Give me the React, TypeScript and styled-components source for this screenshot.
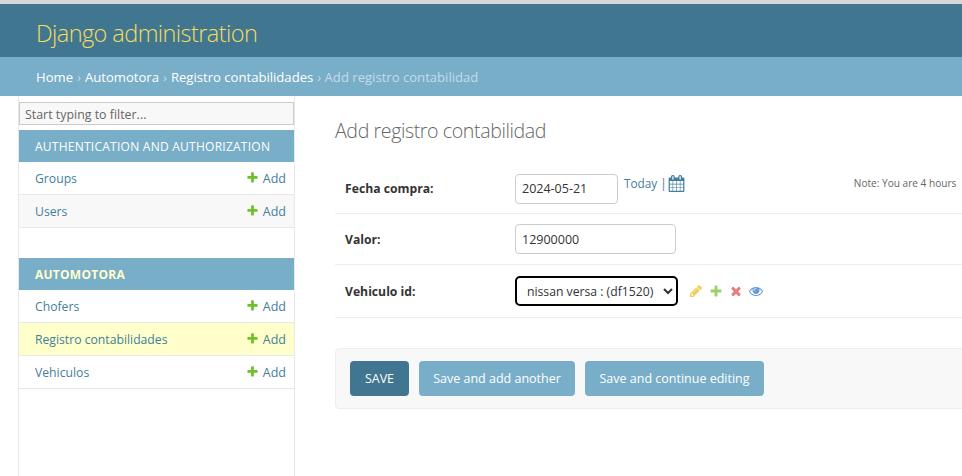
import React from "react";
import styled, { createGlobalStyle } from "styled-components";

const GlobalStyle = createGlobalStyle`
  html, body {
    margin: 0;
    height: 100%;
    overflow: hidden;
    background: #fff;
  }
  body {
    font-family: "Open Sans", "Noto Sans", sans-serif;
    font-size: 13px;
    color: #333;
  }
`;

const Page = styled.div`
  width: 962px;
  height: 476px;
  display: flex;
  flex-direction: column;
  overflow: hidden;
`;

const TopStrip = styled.div`
  height: 4px;
  background: #d6d6da;
`;

const Header = styled.header`
  height: 53px;
  flex: none;
  display: flex;
  align-items: center;
  padding: 4px 0 0 36px;
  box-sizing: border-box;
  background: #417690;
`;

const Branding = styled.h1`
  margin: 0;
  font-size: 23.5px;
  font-weight: 300;
  letter-spacing: -0.57px;
  color: #f5dd5d;
`;

const Breadcrumbs = styled.nav`
  height: 39px;
  flex: none;
  display: flex;
  align-items: center;
  gap: 4px;
  padding-left: 36px;
  background: #79aec8;
  color: #c4dce8;
  font-size: 13.1px;
`;

const Crumb = styled.a`
  color: #fff;
`;

const Body = styled.div`
  flex: 1;
  display: flex;
  min-height: 0;
`;

const Sidebar = styled.aside`
  flex: none;
  width: 275px;
  margin-left: 18px;
  padding-top: 6px;
  border-left: 1px solid #e8e8e8;
  border-right: 1px solid #e8e8e8;
`;

const Filter = styled.input`
  display: block;
  box-sizing: border-box;
  width: 275px;
  height: 23px;
  margin-bottom: 5px;
  padding: 2px 5px 0;
  border: 1px solid #ccc;
  background: #f8f8f8;
  font: 12.4px "Open Sans", sans-serif;
  color: #666;
  &::placeholder {
    color: #666;
    opacity: 1;
  }
`;

const AppModule = styled.section`
  margin-bottom: 30px;
`;

const Caption = styled.div<{ $current?: boolean }>`
  height: 32px;
  display: flex;
  align-items: center;
  padding-left: 16px;
  background: #79aec8;
  color: ${(p) => (p.$current ? "#ffffcc" : "#fff")};
  font-size: 12px;
  font-weight: ${(p) => (p.$current ? 700 : 400)};
  letter-spacing: 0.25px;
`;

const ModelRow = styled.div<{ $alt?: boolean; $active?: boolean }>`
  height: 32px;
  display: flex;
  align-items: center;
  justify-content: space-between;
  padding: 0 8px 0 16px;
  border-bottom: 1px solid #e8e8e8;
  background: ${(p) => (p.$active ? "#ffffcc" : p.$alt ? "#f8f8f8" : "#fff")};
  color: #447e9b;
  font-size: 12.2px;
`;

const AddLink = styled.span`
  display: flex;
  align-items: center;
  gap: 4px;
  font-size: 12.5px;
  svg {
    margin-bottom: 2px;
  }
`;

const Main = styled.main`
  flex: 1;
  min-width: 0;
  padding: 21px 0 0 40px;
`;

const Title = styled.h2`
  margin: 0 0 19px;
  height: 28px;
  line-height: 28px;
  font-size: 19.6px;
  font-weight: 300;
  letter-spacing: -0.4px;
  color: #666;
`;

const FormRow = styled.div<{ $h: number }>`
  width: 700px;
  height: ${(p) => p.$h}px;
  display: flex;
  align-items: center;
  padding-left: 10px;
  box-sizing: border-box;
  border-bottom: 1px solid #eee;
`;

const Label = styled.label`
  flex: none;
  width: 170px;
  font-size: 12.2px;
  font-weight: 700;
  color: #333;
`;

const TextInput = styled.input<{ $w: number }>`
  box-sizing: border-box;
  width: ${(p) => p.$w}px;
  height: 30px;
  padding: 0 6px;
  border: 1px solid #ccc;
  border-radius: 4px;
  background: #fff;
  font: 12.5px "Open Sans", sans-serif;
  color: #333;
`;

const VehicleSelect = styled.select`
  box-sizing: border-box;
  width: 163px;
  height: 30px;
  padding: 0 0 0 6px;
  border: 2px solid #000;
  border-radius: 5px;
  background: #fff;
  font: 12.2px "Open Sans", sans-serif;
  color: #333;
`;

const DateShortcuts = styled.span`
  display: flex;
  flex: none;
  align-items: center;
  gap: 1px;
  margin: 0 0 11px 6px;
  color: #447e9b;
  font-size: 11.8px;
  white-space: nowrap;
`;

const Note = styled.span`
  flex: none;
  margin: 0 0 12px 169px;
  color: #666;
  font-size: 10.1px;
  white-space: nowrap;
`;

const RelatedIcons = styled.span`
  display: flex;
  align-items: center;
  gap: 6px;
  margin-left: 11px;
  opacity: 0.7;
`;

const SubmitRow = styled.div`
  width: 700px;
  box-sizing: border-box;
  height: 61px;
  display: flex;
  align-items: center;
  gap: 10px;
  margin-top: 30px;
  padding-left: 14px;
  background: #f8f8f8;
  border: 1px solid #eee;
  border-radius: 4px;
`;

const SubmitButton = styled.button<{ $primary?: boolean; $w: number }>`
  width: ${(p) => p.$w}px;
  height: 35px;
  padding: 0;
  border: none;
  border-radius: 4px;
  background: ${(p) => (p.$primary ? "#417690" : "#79aec8")};
  color: #fff;
  font: 12.5px "Open Sans", sans-serif;
`;

const PLUS =
  "M1600 796v192q0 40-28 68t-68 28h-416v416q0 40-28 68t-68 28h-192q-40 0-68-28t-28-68v-416h-416q-40 0-68-28t-28-68v-192q0-40 28-68t68-28h416v-416q0-40 28-68t68-28h192q40 0 68 28t28 68v416h416q40 0 68 28t28 68z";
const PENCIL =
  "M491 1536l91-91-235-235-91 91v107h128v128h107zm523-928q0-22-22-22-10 0-17 7l-542 542q-7 7-7 17 0 22 22 22 10 0 17-7l542-542q7-7 7-17zm-54-192l416 416-832 832h-416v-416zm683 96q0 53-37 90l-166 166-416-416 166-165q36-38 90-38 53 0 91 38l235 234q37 39 37 91z";
const CROSS =
  "M1490 1322q0 40-28 68l-136 136q-28 28-68 28t-68-28l-294-294-294 294q-28 28-68 28t-68-28l-136-136q-28-28-28-68t28-68l294-294-294-294q-28-28-28-68t28-68l136-136q28-28 68-28t68 28l294 294 294-294q28-28 68-28t68 28l136 136q28 28 28 68t-28 68l-294 294 294 294q28 28 28 68z";
const EYE =
  "M1664 960q-152-236-381-353 61 104 61 225 0 185-131.500 316.500t-316.500 131.500-316.500-131.500-131.500-316.500q0-121 61-225-229 117-381 353 133 205 333.500 326.500t434.500 121.500 434.500-121.500 333.500-326.500zm-720-384q0-20-14-34t-34-14q-125 0-214.500 89.500t-89.500 214.500q0 20 14 34t34 14 34-14 14-34q0-86 61-147t147-61q20 0 34-14t14-34zm848 384q0 34-20 69-140 230-376.500 368.500t-499.500 138.500-499.500-139-376.500-368q-20-35-20-69t20-69q140-229 376.500-368t499.500-139 499.500 139 376.500 368q20 35 20 69z";
const CALENDAR =
  "M192 1664h288v-288h-288v288zm352 0h320v-288h-320v288zm-352-352h288v-320h-288v320zm352 0h320v-320h-320v320zm-352-384h288v-288h-288v288zm736 736h320v-288h-320v288zm-384-736h320v-288h-320v288zm768 736h288v-288h-288v288zm-384-352h320v-320h-320v320zm-352-864v-288q0-13-9.500-22.500t-22.500-9.500h-64q-13 0-22.500 9.500t-9.500 22.500v288q0 13 9.500 22.500t22.500 9.500h64q13 0 22.500-9.500t9.500-22.500zm736 864h288v-320h-288v320zm-384-384h320v-288h-320v288zm384 0h288v-288h-288v288zm32-480v-288q0-13-9.500-22.500t-22.500-9.500h-64q-13 0-22.500 9.500t-9.500 22.500v288q0 13 9.500 22.500t22.500 9.500h64q13 0 22.500-9.500t9.500-22.500zm384-64v1280q0 52-38 90t-90 38h-1408q-52 0-90-38t-38-90v-1280q0-52 38-90t90-38h128v-96q0-66 47-113t113-47h64q66 0 113 47t47 113v96h384v-96q0-66 47-113t113-47h64q66 0 113 47t47 113v96h128q52 0 90 38t38 90z";

const Icon = ({ d, fill, size }: { d: string; fill: string; size: number }) => (
  <svg width={size} height={size} viewBox="0 0 1792 1792" aria-hidden="true">
    <path fill={fill} d={d} />
  </svg>
);

const Model = ({ name, alt, active }: { name: string; alt?: boolean; active?: boolean }) => (
  <ModelRow $alt={alt} $active={active}>
    <span>{name}</span>
    <AddLink>
      <Icon d={PLUS} fill="#70bf2b" size={13} />
      Add
    </AddLink>
  </ModelRow>
);

export default function App() {
  return (
    <Page>
      <GlobalStyle />
      <TopStrip />
      <Header>
        <Branding>Django administration</Branding>
      </Header>
      <Breadcrumbs>
        <Crumb>Home</Crumb> › <Crumb>Automotora</Crumb> › <Crumb>Registro contabilidades</Crumb> ›{" "}
        Add registro contabilidad
      </Breadcrumbs>
      <Body>
        <Sidebar>
          <Filter placeholder="Start typing to filter..." />
          <AppModule>
            <Caption>AUTHENTICATION AND AUTHORIZATION</Caption>
            <Model name="Groups" />
            <Model name="Users" alt />
          </AppModule>
          <AppModule>
            <Caption $current>AUTOMOTORA</Caption>
            <Model name="Chofers" />
            <Model name="Registro contabilidades" active />
            <Model name="Vehiculos" />
          </AppModule>
        </Sidebar>
        <Main>
          <Title>Add registro contabilidad</Title>
          <FormRow $h={50}>
            <Label>Fecha compra:</Label>
            <TextInput $w={103} defaultValue="2024-05-21" />
            <DateShortcuts>
              Today | <Icon d={CALENDAR} fill="#447e9b" size={17} />
            </DateShortcuts>
            <Note>Note: You are 4 hours</Note>
          </FormRow>
          <FormRow $h={51}>
            <Label>Valor:</Label>
            <TextInput $w={161} defaultValue="12900000" />
          </FormRow>
          <FormRow $h={53}>
            <Label>Vehiculo id:</Label>
            <VehicleSelect defaultValue="1">
              <option value="1">nissan versa : (df1520)</option>
            </VehicleSelect>
            <RelatedIcons>
              <Icon d={PENCIL} fill="#efb80b" size={14} />
              <Icon d={PLUS} fill="#70bf2b" size={14} />
              <Icon d={CROSS} fill="#dd4646" size={14} />
              <Icon d={EYE} fill="#2b70bf" size={14} />
            </RelatedIcons>
          </FormRow>
          <SubmitRow>
            <SubmitButton $primary $w={59}>SAVE</SubmitButton>
            <SubmitButton $w={156}>Save and add another</SubmitButton>
            <SubmitButton $w={179}>Save and continue editing</SubmitButton>
          </SubmitRow>
        </Main>
      </Body>
    </Page>
  );
}
